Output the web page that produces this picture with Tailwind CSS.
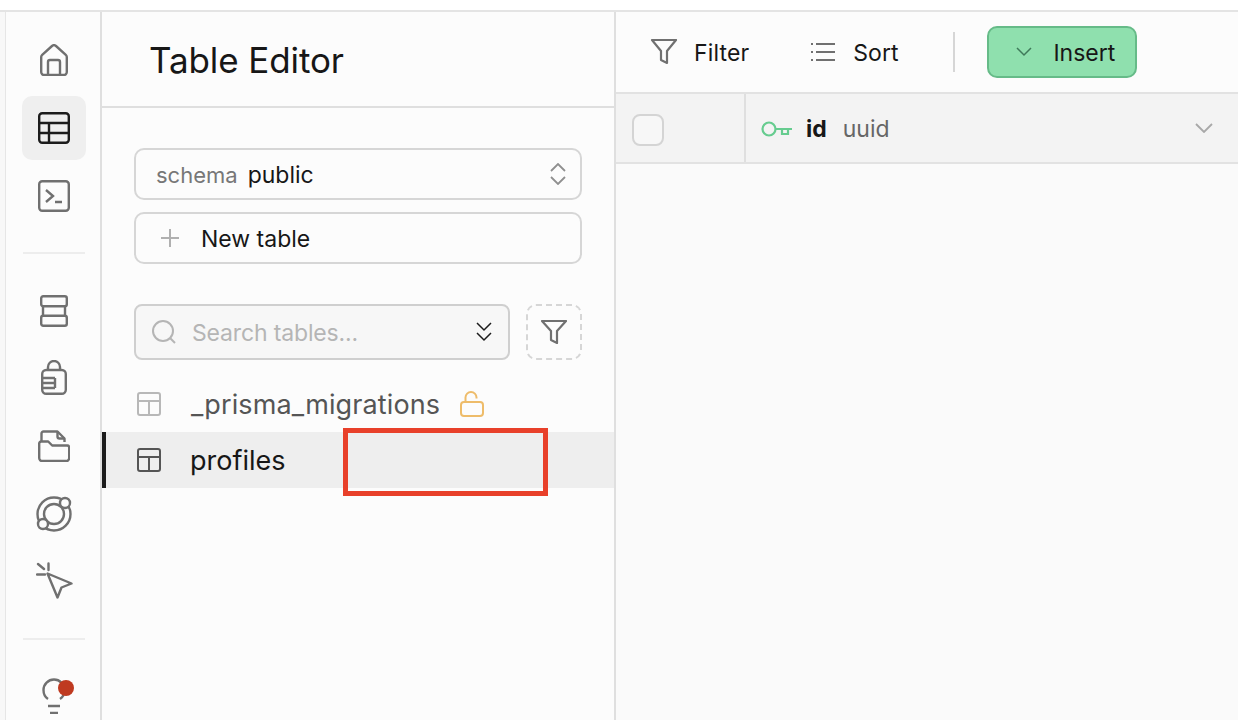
<!doctype html>
<html><head><meta charset="utf-8"><script src="https://cdn.jsdelivr.net/npm/@tailwindcss/browser@4"></script></head>
<body class="m-0 bg-[#fcfcfc]">
<div class="flex flex-col w-[1238px] h-[720px] overflow-hidden font-['Inter',sans-serif] text-[#171717] bg-[#fcfcfc]">
  <div class="h-[12px] shrink-0 bg-white border-b-2 border-[#e4e4e4]"></div>
  <div class="flex flex-1 min-h-0">
    <div class="w-[6px] shrink-0 bg-[#f8f8f8] border-r border-[#e6e6e6]"></div>
    <nav class="w-[96px] shrink-0 border-r-2 border-[#dfdfdf] flex flex-col items-center pt-[16px] pl-[2px] text-[#707070]">
      <div class="size-[64px] shrink-0 flex items-center justify-center">
        <svg width="28" height="32" viewBox="0 0 28 32" fill="none" stroke="currentColor" stroke-width="2.400" stroke-linejoin="round"><path d="M1.200 13a3 3 0 0 1 1-2.200L12 2a3 3 0 0 1 4 0l9.800 8.800a3 3 0 0 1 1 2.200v15a3 3 0 0 1-3 3H4.200a3 3 0 0 1-3-3Z"/><path d="M8 31V18a2 2 0 0 1 2-2h8a2 2 0 0 1 2 2v13"/></svg>
      </div>
      <div class="size-[64px] shrink-0 mt-[4px] flex items-center justify-center rounded-[10px] bg-[#efefef] text-[#1c1c1c]">
        <svg width="32" height="32" viewBox="0 0 32 32" fill="none" stroke="currentColor" stroke-width="2.400"><rect x="1.200" y="1.200" width="29.600" height="29.600" rx="3"/><path d="M1 11h30M1 21h30M11 11v20"/></svg>
      </div>
      <div class="size-[64px] shrink-0 flex items-center justify-center mt-[4px]">
        <svg width="32" height="32" viewBox="0 0 32 32" fill="none" stroke="currentColor" stroke-width="2.400"><rect x="1.200" y="1.200" width="29.600" height="29.600" rx="3"/><path d="M8 10l7 6-7 6M17 22h7"/></svg>
      </div>
      <div class="w-[62px] h-[2px] shrink-0 bg-[#ededed] mt-[24px] mb-[25px]"></div>
      <div class="size-[64px] shrink-0 flex items-center justify-center">
        <svg width="28" height="32" viewBox="0 0 28 32" fill="none" stroke="currentColor" stroke-width="2.400"><rect x="1.200" y="1.200" width="25.600" height="10" rx="2"/><rect x="1.200" y="20.800" width="25.600" height="10" rx="2"/><path d="M3 11v10M25 11v10"/></svg>
      </div>
      <div class="size-[64px] shrink-0 flex items-center justify-center mt-[2px]">
        <svg width="26" height="35" viewBox="0 0 26 35" fill="none" stroke="currentColor" stroke-width="2.400"><path d="M7 10V7a6 6 0 0 1 12 0v3"/><rect x="1.200" y="10" width="23.600" height="23.800" rx="4"/><path d="M1 18h13M1 23h13M1 28h13M14 18v10"/></svg>
      </div>
      <div class="size-[64px] shrink-0 flex items-center justify-center mt-[5px]">
        <svg width="32" height="32" viewBox="0 0 32 32" fill="none" stroke="currentColor" stroke-width="2.400" stroke-linejoin="round"><path d="M3.500 11V3.500a2 2 0 0 1 2-2h14l7 7V12"/><path d="M19.500 1.500v5a2 2 0 0 0 2 2h5"/><path d="M1.200 13.500a2 2 0 0 1 2-2h7l4 4h15a2 2 0 0 1 2 2v10.500a3 3 0 0 1-3 3H4.200a3 3 0 0 1-3-3Z"/></svg>
      </div>
      <div class="size-[64px] shrink-0 flex items-center justify-center mt-[4px]">
        <svg width="36" height="36" viewBox="0 0 36 36" fill="none" stroke="currentColor" stroke-width="2.400"><circle cx="18" cy="18" r="16.500"/><circle cx="18" cy="18" r="10"/><circle cx="29" cy="7" r="5" fill="#fcfcfc"/><circle cx="7" cy="28" r="5" fill="#fcfcfc"/></svg>
      </div>
      <div class="size-[64px] shrink-0 flex items-center justify-center mt-[2px]">
        <svg width="37" height="37" viewBox="0 0 37 37" fill="none" stroke="currentColor" stroke-width="2.400" stroke-linecap="round" stroke-linejoin="round"><path d="M11.500 11.500L35.500 21.500 25.500 25.500 21.500 35.500Z"/><path d="M2 2l6 5M12.500 1.500v6.500M1 12.500h8"/></svg>
      </div>
      <div class="w-[62px] h-[2px] shrink-0 bg-[#ededed] mt-[26px] mb-[40px]"></div>
      <div class="relative size-[32px] shrink-0 flex items-center justify-center">
        <svg class="shrink-0" width="24" height="36" viewBox="0 0 24 36" fill="none" stroke="currentColor" stroke-width="2.400"><path d="M6 21C3 19 1.500 15.500 1.500 12a10.500 10.500 0 0 1 21 0c0 3.500-1.500 7-4.500 9"/><path d="M6 28h12M8 35h8"/></svg>
        <span class="absolute left-[20px] top-0 size-[16px] rounded-full bg-[#bf3a20]"></span>
      </div>
    </nav>

    <aside class="w-[514px] shrink-0 border-r-2 border-[#dfdfdf] flex flex-col">
      <div class="h-[96px] shrink-0 border-b-2 border-[#dfdfdf] flex items-center pl-[47px] pt-[2px]">
        <h1 class="text-[35px] font-normal leading-none tracking-[-0.1px]">Table Editor</h1>
      </div>
      <div class="pl-[32px] pr-[32px] pt-[40px]">
        <div class="h-[52px] rounded-[10px] border-2 border-[#d6d6d6] flex items-center pl-[20px] pr-[14px] text-[23px]">
          <span class="text-[#777] text-[22px] pt-[2px]">schema</span><span class="ml-[10px] pt-[2px]">public</span>
          <svg class="ml-auto" width="16" height="22" viewBox="0 0 16 22" fill="none" stroke="#8f8f8f" stroke-width="1.800"><path d="M1 8l7-7 7 7M1 14l7 7 7-7"/></svg>
        </div>
        <div class="h-[52px] mt-[12px] rounded-[10px] border-2 border-[#d6d6d6] flex items-center pl-[24px] text-[23px]">
          <svg width="20" height="20" viewBox="0 0 20 20" fill="none" stroke="#b0b0b0" stroke-width="2"><path d="M10 1v18M1 10h18"/></svg>
          <span class="ml-[21px] pt-[2px]">New table</span>
        </div>
        <div class="flex justify-between mt-[40px]">
          <div class="w-[376px] h-[56px] rounded-[8px] border-2 border-[#cfcfcf] bg-[#f7f7f7] flex items-center pl-[16px] pr-[16px] text-[23px] text-[#b5b5b5]">
            <svg width="24" height="24" viewBox="0 0 24 24" fill="none" stroke="#b5b5b5" stroke-width="2"><circle cx="11" cy="11" r="10"/><path d="M18 18l5 5"/></svg>
            <span class="ml-[16px] pt-[2px] tracking-[-0.15px]">Search tables...</span>
            <svg class="ml-auto" width="16" height="20" viewBox="0 0 16 20" fill="none" stroke="#1c1c1c" stroke-width="1.500"><path d="M1 1l7 7 7-7M1 11l7 7 7-7"/></svg>
          </div>
          <div class="size-[56px] rounded-[10px] border-2 border-dashed border-[#d6d6d6] flex items-center justify-center">
            <svg width="26" height="24" viewBox="0 0 26 24" fill="none" stroke="#707070" stroke-width="2.200" stroke-linejoin="round"><path d="M1 1h24l-9 10v12l-6-3v-9Z"/></svg>
          </div>
        </div>
      </div>
      <div class="mt-[16px] h-[56px] flex items-center pl-[34px] text-[#555] text-[27px]">
        <svg class="text-[#b8b8b8]" width="26" height="26" viewBox="0 0 26 26" fill="none" stroke="currentColor" stroke-width="2"><rect x="2" y="2" width="22" height="22" rx="2"/><path d="M2 10h22M13 10v14"/></svg>
        <span class="ml-[29px] pt-[2px] tracking-[0.12px]">_prisma_migrations</span>
        <svg class="ml-[20px]" width="24" height="26" viewBox="0 0 24 26" fill="none" stroke="#eebc6a" stroke-width="2"><rect x="1" y="11" width="22" height="14" rx="3"/><path d="M5.500 11V6.500a5.500 5.500 0 0 1 11 0v1"/></svg>
      </div>
      <div class="relative h-[56px] flex items-center pl-[32px] bg-[#eeeeee] border-l-[2px] border-l-transparent text-[27px]">
        <span class="absolute left-[-2px] top-0 bottom-0 w-[4px] bg-[#1c1c1c]"></span>
        <svg class="text-[#555]" width="26" height="26" viewBox="0 0 26 26" fill="none" stroke="currentColor" stroke-width="2"><rect x="2" y="2" width="22" height="22" rx="2"/><path d="M2 10h22M13 10v14"/></svg>
        <span class="ml-[28px] pt-[2px]">profiles</span>
        <div class="absolute left-[239px] top-[-4px] w-[205px] h-[68px] border-[5px] border-[#e8402a]"></div>
      </div>
    </aside>

    <main class="flex-1 flex flex-col min-w-0">
      <div class="h-[80px] shrink-0 flex items-center pl-[34px] text-[23px]">
        <svg width="28" height="26" viewBox="0 0 28 26" fill="none" stroke="#707070" stroke-width="2.200" stroke-linejoin="round"><path d="M2 1h24l-9 11v12l-6-3v-9Z"/></svg>
        <span class="ml-[16px] pt-[2px] tracking-[0.15px]">Filter</span>
        <svg class="ml-[62px]" width="24" height="20" viewBox="0 0 24 20" fill="none" stroke="#707070" stroke-width="2"><path d="M5 2h19M5 10h19M5 18h19M0 2h2M0 10h2M0 18h2"/></svg>
        <span class="ml-[18px] pt-[2px]">Sort</span>
        <div class="w-[2px] h-[40px] bg-[#d6d6d6] ml-[55px]"></div>
        <div class="w-[150px] h-[52px] ml-[32px] rounded-[10px] border-2 border-[#66bb88] bg-[#8fe0ae] flex items-center pl-[27px]">
          <svg width="16" height="10" viewBox="0 0 16 10" fill="none" stroke="#3f7a5a" stroke-width="1.500"><path d="M1 1l7 7 7-7"/></svg>
          <span class="ml-[21px] pt-[2px]">Insert</span>
        </div>
      </div>
      <div class="h-[72px] shrink-0 border-y-2 border-[#e2e2e2] bg-[#f3f3f3] flex items-center text-[23px]">
        <div class="w-[130px] h-full shrink-0 border-r-2 border-[#dfdfdf] flex items-center pl-[16px]">
          <div class="size-[32px] mt-[3px] rounded-[8px] border-2 border-[#d4d4d4] bg-[#f7f7f7]"></div>
        </div>
        <svg class="ml-[15px] mt-[1px]" width="32" height="16" viewBox="0 0 32 16" fill="none" stroke="#66cc8f" stroke-width="2.200"><circle cx="8" cy="8" r="6.500"/><path d="M14 8h17M21 8v5h6V8"/></svg>
        <span class="ml-[13px] pt-[2px] font-bold">id</span>
        <span class="ml-[16px] pt-[2px] text-[#666]">uuid</span>
        <svg class="ml-auto mr-[25px]" width="18" height="10" viewBox="0 0 18 10" fill="none" stroke="#a8a8a8" stroke-width="1.800"><path d="M1 1l8 8 8-8"/></svg>
      </div>
      <div class="flex-1 bg-[#fafafa]"></div>
    </main>
  </div>
</div>
</body></html>
